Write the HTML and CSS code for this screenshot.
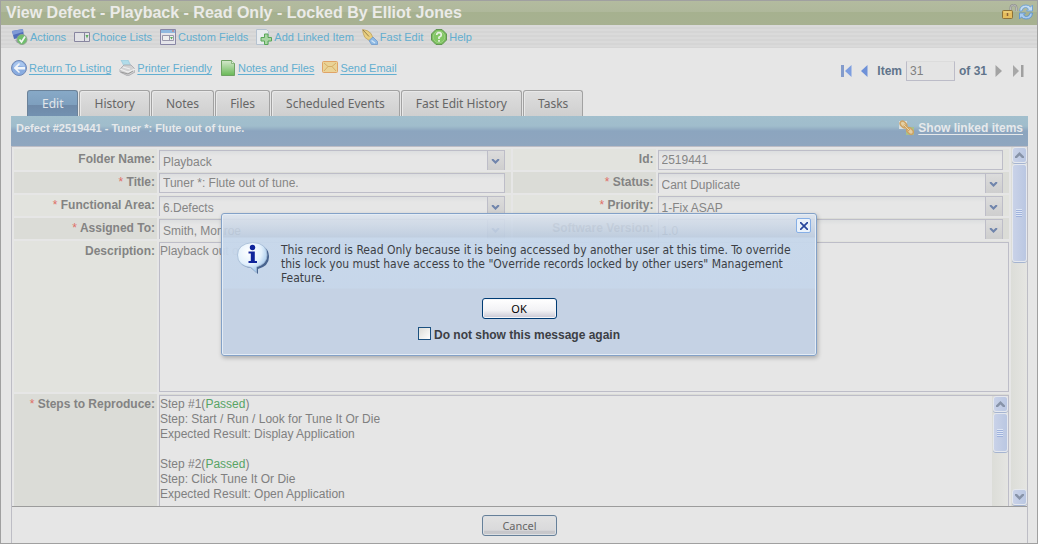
FILE: index.html
```html
<!DOCTYPE html>
<html lang="en">
<head>
    <meta charset="UTF-8">
    <meta name="viewport" content="width=device-width, initial-scale=1.0">
    <title>View Defect</title>
    <link rel="stylesheet" href="styles.css">
</head>
<body>

<header class="titlebar">
    <h1>View Defect - Playback - Read Only - Locked By Elliot Jones</h1>
    <svg class="icon" viewBox="0 0 16 16"><path d="M8.500 7V4q0-3 3-3t3 3v3" fill="none" stroke="#8e8e8e" stroke-width="2"/><path d="M8.500 7V4q0-3 3-3t3 3v3" fill="none" stroke="#ccc" stroke-width=".7"/><rect x=".5" y="6.500" width="10" height="8" rx="1" fill="#e5bd5d" stroke="#8d7138"/><path d="M2 8h7" stroke="#f1d88c"/><path d="M5.500 9v3" stroke="#8d6338" stroke-width="1.500"/></svg>
    <svg class="icon" viewBox="0 0 16 16"><path d="M1.500 7Q2 1 8 1q3 0 4.500 2L14.500 1v6H8.500l2-2Q9 3.500 7.500 3.500 4.500 3.500 4 7z" fill="#c4dcf2" stroke="#6b9fd6" stroke-width=".9"/><path d="M14.500 9Q14 15 8 15q-3 0-4.500-2L1.500 15V9h6l-2 2q1.500 1.500 3 1.500 3 0 3.500-3.500z" fill="#a9cbee" stroke="#5b93d0" stroke-width=".9"/></svg>
</header>

<nav class="toolbar">
    <a href="#">
        <svg class="icon" viewBox="0 0 16 16"><path d="M0 2l11-2 1 8-10 2z" fill="#4f6dba"/><path d="M0 2l11-2v3L1 6z" fill="#7f9ad5"/><path d="M3 11l6-1 1 4-5 0z" fill="#a9a9b4"/><circle cx="10" cy="10.500" r="5" fill="#6fbe6c" stroke="#8fa58e"/><path d="M7.500 10.500l2 2.500L13 7.500" fill="none" stroke="#f0f5f0" stroke-width="1.700"/></svg>
        Actions</a>
    <a href="#">
        <svg class="icon" viewBox="0 0 16 16"><path d="M.5 3.500h15v9H.500z" fill="#e2e2e6" stroke="#8886a0"/><path d="M10.500 3.500v9" stroke="#8886a0"/><path d="M11.500 6h3L13 9.500z" fill="#5cab5f"/></svg>
        Choice Lists</a>
    <a href="#">
        <svg class="icon" viewBox="0 0 16 16"><path d="M.5.5h15v15H.500z" fill="#e5e5ea" stroke="#8886a5"/><path d="M1 1h14v3H1z" fill="#8fb8df"/><path d="M12 2h2" stroke="#d96b60"/><path d="M2.500 6.500h11v5h-11z" fill="#eee" stroke="#9997aa"/><path d="M9.500 7v5" stroke="#9997aa"/><path d="M10 8h3l-1.500 2.500z" fill="#5cab5f"/></svg>
        Custom Fields</a>
    <a href="#">
        <svg class="icon" viewBox="0 0 16 16"><path d="M.5.5h10l2 2v13H.500z" fill="#e8ecef" stroke="#b5c2d0"/><path d="M9 5.500h3.500V9H16v3.500h-3.500V16H9v-3.500H5.500V9H9z" fill="#a9d5a3" stroke="#58a757" transform="translate(-.500 -.500)"/></svg>
        Add Linked Item</a>
    <a href="#">
        <svg class="icon" viewBox="0 0 16 16"><path d="M.5.500Q6 1 9 4.500L11 9l-3 3-5-3.500Q1 5 .5.500z" fill="#e9cf80" stroke="#bfa25a" stroke-width=".8"/><path d="M1 1l6 6.500" stroke="#7d6b44" stroke-width=".8"/><path d="M7 11.500L11 8l4.500 4.500v3h-6z" fill="#8fb9e3" stroke="#6d99cd" stroke-width=".8"/><path d="M9.500 11.500l3.500 2.500" stroke="#d2e5f5" stroke-width="1.500"/></svg>
        Fast Edit</a>
    <a href="#">
        <svg class="icon" viewBox="0 0 16 16"><path d="M5 .5h6L15.500 5v6L11 15.500H5L.5 11V5z" fill="#79bd5a" stroke="#619552"/><circle cx="8" cy="8" r="5.800" fill="#83c765" stroke="#a8d592" stroke-width=".7"/><path d="M5.700 6q0-2.300 2.300-2.300T10.300 6Q10.300 7.300 8 8.300V10M8 11v1.800" fill="none" stroke="#e9f1e5" stroke-width="1.700"/></svg>
        Help</a>
</nav>

<div class="subbar">
    <nav class="links">
        <a href="#">
            <svg class="icon" viewBox="0 0 16 16"><circle cx="8" cy="8" r="7.500" fill="#89ace0" stroke="#7289b5"/><path d="M2 7Q3 1.500 8 1.500T14 7q-6-2-12 0z" fill="#a8c5ed"/><path d="M2.500 8L8 3l1 1-2.500 3H14v2.500H6.500L9 12l-1 1z" fill="#f2f5f9"/></svg>
            <span>Return To Listing</span></a>
        <a href="#">
            <svg class="icon" viewBox="0 0 16 16"><path d="M2 0h7l3 6H5z" fill="#b2dce9" stroke="#8fc5d8" stroke-width=".6"/><path d="M1 9l4-4h7l4 4v3l-7 4-8-4z" fill="#d2d2d3" stroke="#a4a4aa" stroke-width=".8"/><path d="M1 9l8 3 7-3M4 7l7 2" fill="none" stroke="#eee" stroke-width="1.200"/><path d="M2 12l7 2 5-3" fill="none" stroke="#999"/></svg>
            <span>Printer Friendly</span></a>
        <a href="#">
            <svg class="icon" viewBox="0 0 16 16"><defs><linearGradient id="note" x1="0" y1="0" x2="0" y2="1"><stop offset="0" stop-color="#d5e7cd"/><stop offset="1" stop-color="#68b955"/></linearGradient></defs><path d="M1.500.5h10l3 3v12h-13z" fill="url(#note)" stroke="#6fa263"/><path d="M11.500.5v3h3" fill="#e3efdd" stroke="#6fa263" stroke-width=".7"/></svg>
            <span>Notes and Files</span></a>
        <a href="#">
            <svg class="icon" viewBox="0 0 16 16"><rect x=".5" y="1.500" width="15" height="11" rx="1" fill="#ead397" stroke="#e0a367"/><path d="M2 3l4 3.500h4L14 3M2 11l4-4.500M14 11l-4-4.500" fill="none" stroke="#d7ae66"/></svg>
            <span>Send Email</span></a>
    </nav>
    <div class="pager">
        <button class="pager-btn" aria-label="First"><svg width="11" height="12" viewBox="0 0 11 12"><path d="M0 0h3v12H0z" fill="#839bcb"/><path d="M10.500 0v12L4 6z" fill="#7d9ee0"/></svg></button>
        <button class="pager-btn" aria-label="Previous"><svg width="7" height="12" viewBox="0 0 7 12"><path d="M6.500 0v12L0 6z" fill="#6e91d8"/></svg></button>
        <label for="item">Item</label>
        <input class="pager-input" type="text" id="item" value="31">
        <span>of 31</span>
        <button class="pager-btn next" aria-label="Next"><svg width="7" height="12" viewBox="0 0 7 12"><path d="M.5 0v12L7 6z" fill="#a3a3a3"/></svg></button>
        <button class="pager-btn" aria-label="Last"><svg width="11" height="12" viewBox="0 0 11 12"><path d="M0 0v12l6-6z" fill="#a8a8a8"/><path d="M8 0h2.500v12H8z" fill="#a0a0a0"/></svg></button>
    </div>
</div>

<nav class="tabs">
    <a class="active" href="#">Edit</a>
    <a href="#">History</a>
    <a href="#">Notes</a>
    <a href="#">Files</a>
    <a href="#">Scheduled Events</a>
    <a href="#">Fast Edit History</a>
    <a href="#">Tasks</a>
</nav>

<main class="panel">
    <div class="panel-head">
        <h2>Defect #2519441 - Tuner *: Flute out of tune.</h2>
        <svg class="icon" viewBox="0 0 16 16"><path d="M0 1h8v8H0z" fill="#d5dde0"/><path d="M7 7h8v8H7z" fill="#a2c191"/><g fill="#e3cfa4" stroke="#cda263" stroke-width="1.500"><ellipse cx="4.500" cy="4.500" rx="3.800" ry="2.600" transform="rotate(45 4.500 4.500)"/><ellipse cx="11" cy="11" rx="3.800" ry="2.600" transform="rotate(45 11 11)"/></g><path d="M5 5l5.500 5.500" stroke="#cda263" stroke-width="2.500"/><path d="M5 5l5.500 5.500" stroke="#ead5aa"/></svg>
        <a href="#">Show linked items</a>
    </div>

    <div class="panel-body">
        <form class="form">
            <label for="folder">Folder Name:</label>
            <div class="cell">
                <div class="combo"><select id="folder"><option>Playback</option></select><svg viewBox="0 0 9 6"><path d="M0 0h2l2.500 2.500L7 0h2v1.500L4.500 6 0 1.500z"/></svg></div>
            </div>
            <label for="defect-id">Id:</label>
            <div class="cell"><input type="text" id="defect-id" value="2519441"></div>

            <label class="even" for="title"><b>*</b> Title:</label>
            <div class="cell even"><input type="text" id="title" value="Tuner *: Flute out of tune."></div>
            <label class="even" for="status"><b>*</b> Status:</label>
            <div class="cell even">
                <div class="combo"><select id="status"><option>Cant Duplicate</option></select><svg viewBox="0 0 9 6"><path d="M0 0h2l2.500 2.500L7 0h2v1.500L4.500 6 0 1.500z"/></svg></div>
            </div>

            <label for="area"><b>*</b> Functional Area:</label>
            <div class="cell">
                <div class="combo"><select id="area"><option>6.Defects</option></select><svg viewBox="0 0 9 6"><path d="M0 0h2l2.500 2.500L7 0h2v1.500L4.500 6 0 1.500z"/></svg></div>
            </div>
            <label for="priority"><b>*</b> Priority:</label>
            <div class="cell">
                <div class="combo"><select id="priority"><option>1-Fix ASAP</option></select><svg viewBox="0 0 9 6"><path d="M0 0h2l2.500 2.500L7 0h2v1.500L4.500 6 0 1.500z"/></svg></div>
            </div>

            <label class="even" for="assigned"><b>*</b> Assigned To:</label>
            <div class="cell even">
                <div class="combo"><select id="assigned"><option>Smith, Monroe</option></select><svg viewBox="0 0 9 6"><path d="M0 0h2l2.500 2.500L7 0h2v1.500L4.500 6 0 1.500z"/></svg></div>
            </div>
            <label class="even" for="version">Software Version:</label>
            <div class="cell even">
                <div class="combo"><select id="version"><option>1.0</option></select><svg viewBox="0 0 9 6"><path d="M0 0h2l2.500 2.500L7 0h2v1.500L4.500 6 0 1.500z"/></svg></div>
            </div>

            <label for="description">Description:</label>
            <div class="cell wide"><textarea id="description">Playback out of tune</textarea></div>

            <label class="even" id="steps-label"><b>*</b> Steps to Reproduce:</label>
            <div class="cell even wide">
                <div class="steps" role="textbox" aria-labelledby="steps-label">
                    <div class="steps-text">Step #1(<em>Passed</em>)<br>
                        Step: Start / Run / Look for Tune It Or Die<br>
                        Expected Result: Display Application<br>
                        <br>
                        Step #2(<em>Passed</em>)<br>
                        Step: Click Tune It Or Die<br>
                        Expected Result: Open Application
                    </div>
                    <div class="scrollbar">
                        <div class="scroll-btn"><svg viewBox="0 0 9 6"><path d="M0 6h2l2.500-2.500L7 6h2V4.500L4.500 0 0 4.500z"/></svg></div>
                        <div class="scroll-thumb small"><i></i></div>
                    </div>
                </div>
            </div>
        </form>
        <div class="scrollbar">
            <div class="scroll-btn"><svg viewBox="0 0 9 6"><path d="M0 6h2l2.500-2.500L7 6h2V4.500L4.500 0 0 4.500z"/></svg></div>
            <div class="scroll-thumb"><i></i></div>
            <div class="scroll-btn down"><svg viewBox="0 0 9 6"><path d="M0 0h2l2.500 2.500L7 0h2v1.500L4.500 6 0 1.500z"/></svg></div>
        </div>
    </div>

    <footer class="panel-foot">
        <button class="btn btn-cancel">Cancel</button>
    </footer>
</main>

<div class="dialog" role="dialog" id="dialog">
    <button class="close" id="close-dialog" aria-label="Close"><svg viewBox="0 0 8 8"><path d="M0 0l8 8M8 0L0 8" stroke="#27469c" stroke-width="1.700"/></svg></button>
    <div class="message">
        <svg class="info" viewBox="0 0 32 32">
            <defs><radialGradient id="bubble" cx=".4" cy=".3" r=".75"><stop offset="0" stop-color="#fff"/><stop offset=".55" stop-color="#e4f1fc"/><stop offset="1" stop-color="#8fbbe6"/></radialGradient></defs>
            <path d="M17 2q15 1 15 13 0 9-11 12v5l-7-6Q3 25 2 16z" fill="#48648f"/>
            <path d="M15.500.5Q30 1 30 13q0 9-10.500 12v6L14 25.500Q.5 24 .5 13T15.500.5z" fill="url(#bubble)" stroke="#a3bad4" stroke-width=".8"/>
            <circle cx="15.500" cy="5.500" r="2.700" fill="#10259b"/>
            <path d="M11.500 9.500h6.300V19H20v2h-8.500v-2h2.300v-7.500h-2.300z" fill="#10259b"/>
        </svg>
        <p>This record is Read Only because it is being accessed by another user at this time. To override this lock you must have access to the "Override records locked by other users" Management Feature.</p>
    </div>
    <button class="btn" id="ok">OK</button>
    <label class="again"><input type="checkbox"> Do not show this message again</label>
</div>

<script>
    const dialog = document.getElementById('dialog');

    ['ok', 'close-dialog'].forEach(id => {
        document.getElementById(id).addEventListener('click', () => {
            dialog.style.display = 'none';
        });
    });
</script>

</body>
</html>
```

FILE: styles.css
```css
* {
    box-sizing: border-box;
}

body {
    display: flex;
    flex-direction: column;
    height: 100vh;
    margin: 0;
    border: 1px solid #a0a0a0;
    background-color: #e6e6e6;
    color: #858585;
    font-family: "Liberation Sans", Arial, sans-serif;
    font-size: 12px;
    overflow: hidden;
}

h1, h2, p {
    margin: 0;
}

input, select, textarea, button {
    font-family: inherit;
    font-size: 12px;
    color: inherit;
    margin: 0;
}

.icon {
    width: 16px;
    height: 16px;
    flex: none;
}

.titlebar {
    display: flex;
    align-items: center;
    height: 24px;
    flex: none;
    padding: 0 3px 0 5px;
    background: linear-gradient(#b3bb9f 0, #afb89b 11px, #a6b18f 11px, #a7b191 100%);
}

.titlebar h1 {
    flex: 1;
    font-size: 16px;
    line-height: 24px;
    color: #ebebe8;
}

.titlebar .icon {
    margin-bottom: 2px;
}

.toolbar {
    display: flex;
    align-items: center;
    gap: 8px;
    height: 23px;
    flex: none;
    padding-left: 11px;
    background: repeating-linear-gradient(#dadada 0, #dadada 2px, #d5d5d5 2px, #d5d5d5 4px);
}

.toolbar a, .links a {
    display: flex;
    align-items: center;
    gap: 2px;
    color: #62aed0;
    font-size: 11px;
    text-decoration: none;
}

.links a span {
    text-decoration: underline;
    text-underline-offset: 2px;
}

.subbar {
    display: flex;
    justify-content: space-between;
    height: 42px;
    flex: none;
    padding: 12px 13px 0 10px;
}

.links, .pager {
    display: flex;
    align-items: center;
    height: 16px;
    gap: 8px;
}

.pager {
    height: 22px;
    gap: 4px;
    color: #60748b;
    font-weight: bold;
}

.pager-btn {
    display: flex;
    padding: 0;
    margin-right: 5px;
    border: none;
    background: none;
}

.pager-btn:last-child {
    margin: 0 0 0 2px;
}

.pager-btn.next {
    margin-left: 4px;
}

.pager-input {
    width: 49px;
    height: 20px;
    padding: 0 3px;
    border: 1px solid #bcbcc8;
    border-top-color: #dcdcdc;
    background-color: #e4e4e4;
    color: #808080;
}

.tabs {
    display: flex;
    gap: 1px;
    height: 26px;
    flex: none;
    padding-left: 26px;
    font-family: "Noto Sans", sans-serif;
}

.tabs a {
    padding: 0 14px;
    border: 1px solid #a2a2a2;
    border-bottom: none;
    border-radius: 3px 3px 0 0;
    background: linear-gradient(#dedede, #cfcfcf);
    box-shadow: inset 1px 1px #e8e8e8;
    color: #666;
    line-height: 25px;
    text-decoration: none;
}

.tabs a.active {
    border-color: #6b8299;
    background: linear-gradient(#87a9c7 0, #7e9fbe 14px, #6e89a8 14px, #7391b0 100%);
    box-shadow: none;
    color: #e2e6ea;
}

.panel {
    display: flex;
    flex-direction: column;
    flex: 1;
    min-height: 0;
    margin: 0 9px 0 10px;
    border: 1px solid #bdbdc5;
    border-width: 0 1px;
}

.panel-head {
    display: flex;
    align-items: center;
    height: 30px;
    flex: none;
    margin: 0 -1px;
    padding: 0 5px 6px;
    background: linear-gradient(#a2bfcd 0, #a0bdcc 10px, #8ca5bf 15px, #8fa6bf 100%);
    color: #e6e9eb;
}

.panel-head h2 {
    flex: 1;
    font-size: 11px;
}

.panel-head a {
    margin-left: 3px;
    color: inherit;
    font-weight: bold;
    text-underline-offset: 2px;
}

.panel-body {
    display: flex;
    flex: 1;
    min-height: 0;
    border-top: 1px solid #bdbdc5;
    border-bottom: 1px solid #9c9c9c;
}

.form {
    display: grid;
    grid-template-columns: 143px 1fr 143px 1fr;
    grid-template-rows: repeat(4, 21px) 151px 1fr;
    gap: 2px;
    flex: 1;
    min-height: 0;
    padding: 2px 2px 0;
}

.form > label {
    padding-right: 2px;
    background-color: #e2e3de;
    font-weight: bold;
    line-height: 20px;
    text-align: right;
    color: #838383;
}

.form label b {
    color: #df6f68;
    font-weight: normal;
}

.cell {
    min-width: 0;
    min-height: 0;
    padding: 1px 6px 0 0;
    background-color: #e2e3de;
}

.form > .even {
    background-color: #dbdcd7;
}

.cell.wide {
    grid-column: 2 / 5;
    padding-right: 0;
}

.cell input, .cell textarea, .combo, .steps {
    display: block;
    width: 100%;
    height: 100%;
    border: 1px solid #bdbdc8;
    border-radius: 0;
    background: linear-gradient(#dcdedf, #e6e6e6 5px);
}

.cell input {
    padding: 0 3px;
}

.cell textarea {
    padding: 1px 0;
    line-height: 15px;
    resize: none;
    background: #e6e6e6;
}

.combo {
    position: relative;
    border-bottom: none;
}

.combo select {
    display: block;
    width: 100%;
    height: 100%;
    padding: 3px 3px 0;
    border: none;
    background: linear-gradient(#bdbdc8, #bdbdc8) right 16px top / 1px 100% no-repeat,
        linear-gradient(#dcdcdc, #cecece) right top / 16px 100% no-repeat;
    appearance: none;
}

.combo svg {
    position: absolute;
    right: 4px;
    top: 8px;
    width: 9px;
    height: 5px;
    fill: #7085ac;
    pointer-events: none;
}

.steps {
    display: flex;
    border-bottom: none;
    background: #e6e6e6;
    overflow: hidden;
}

.steps-text {
    flex: 1;
    padding-top: 1px;
    line-height: 15px;
    color: #808080;
}

.steps em {
    color: #58a465;
    font-style: normal;
}

.scrollbar {
    display: flex;
    flex-direction: column;
    align-items: center;
    gap: 1px;
    width: 16px;
    flex: none;
    background: linear-gradient(90deg, #dcddd8, #e5e5e2);
}

.scroll-btn, .scroll-thumb {
    display: flex;
    align-items: center;
    justify-content: center;
    width: 15px;
    height: 16px;
    flex: none;
    border: 1px solid #e5e8ee;
    border-radius: 3px;
    background: linear-gradient(90deg, #c9d2e8, #bac7e2);
    box-shadow: 0 1px #a5b4d0;
}

.scroll-btn svg {
    width: 9px;
    height: 6px;
    fill: #8793a8;
}

.scroll-btn.down {
    margin-top: auto;
    margin-bottom: 1px;
}

.scroll-thumb {
    height: 98px;
}

.scroll-thumb.small {
    height: 39px;
}

.scroll-thumb i {
    width: 6px;
    height: 8px;
    background: repeating-linear-gradient(#dde5f4 0, #dde5f4 1px, #9fb2dc 1px, #9fb2dc 2px);
}

.panel-foot {
    display: flex;
    justify-content: center;
    height: 36px;
    flex: none;
    padding-top: 8px;
}

.btn {
    width: 75px;
    height: 21px;
    padding: 0;
    border: 1px solid #003c74;
    border-radius: 3px;
    background: linear-gradient(#fff 0, #f2f2f5 60%, #d3d2dc 90%, #c9c8d2 100%);
    box-shadow: inset 0 0 0 1px #f5f5f8;
    color: #000;
    font-family: "Noto Sans", sans-serif;
    font-size: 11px;
}

.btn-cancel {
    border-color: #668099;
    background: linear-gradient(#e2e2e2 0, #d9d9db 75%, #c6c6ca 80%, #c9c9cc 100%);
    box-shadow: inset 0 0 0 1px #dcdfe3;
    color: #666;
}

/* sits over the form, so the fields show faintly through it */
.dialog {
    position: absolute;
    top: 213px;
    left: 50%;
    display: flex;
    flex-direction: column;
    align-items: center;
    width: 596px;
    padding: 28px 15px 12px;
    transform: translateX(-50%);
    border: 1px solid #83a1c7;
    border-radius: 3px;
    background: linear-gradient(rgba(221, 228, 238, .88) 0, rgba(187, 203, 223, .88) 23px, rgba(198, 215, 235, .94) 24px, rgba(198, 214, 234, .97) 74px, #c5d2e4 75px, #c5d2e4 100%);
    box-shadow: inset 0 0 0 1px #e4ecf5, 1px 2px 4px rgba(0, 0, 0, .25);
    color: #3c3f45;
}

.close {
    position: absolute;
    top: 4px;
    right: 5px;
    display: flex;
    align-items: center;
    justify-content: center;
    width: 15px;
    height: 15px;
    padding: 0;
    border: 1px solid #86afe6;
    border-radius: 2px;
    background-color: #eaf2fb;
}

.close svg {
    width: 8px;
    height: 8px;
}

.message {
    display: flex;
    gap: 12px;
    width: 100%;
    margin-bottom: 13px;
}

.info {
    width: 32px;
    height: 32px;
    flex: none;
}

.message p {
    padding-top: 1px;
    font-family: "DejaVu Sans Condensed", "DejaVu Sans", sans-serif;
    font-size: 12px;
    line-height: 14px;
}

.again {
    display: flex;
    align-items: center;
    gap: 3px;
    margin-top: 8px;
    font-weight: bold;
}

.again input {
    width: 13px;
    height: 13px;
    margin-bottom: 3px;
    border: 1px solid #1c5180;
    background: linear-gradient(135deg, #dcdcd7, #fff);
    appearance: none;
}
```
